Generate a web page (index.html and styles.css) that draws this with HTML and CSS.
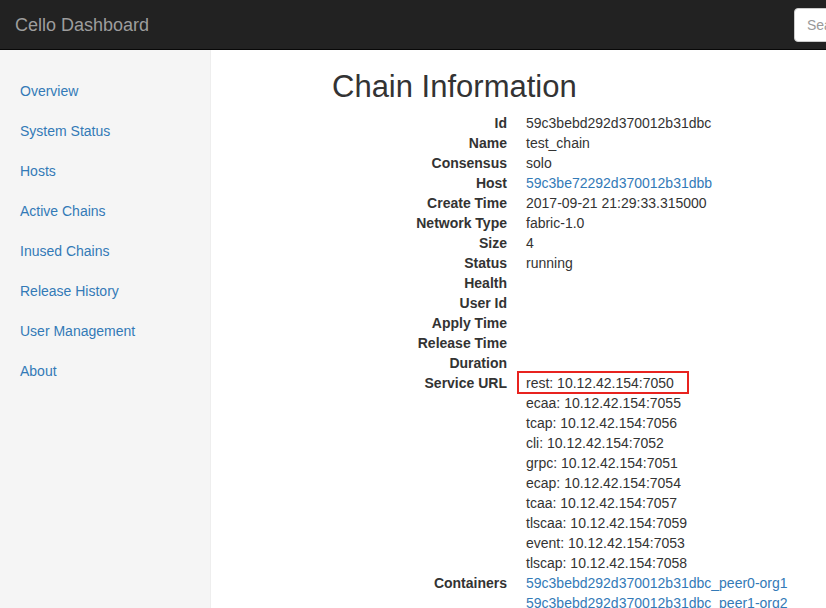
FILE: index.html
```html
<!DOCTYPE html>
<html>
<head>
<meta charset="utf-8">
<link rel="stylesheet" href="styles.css">
</head>
<body>
<header class="navbar">
  <a class="brand" href="#">Cello Dashboard</a>
  <input class="search" type="text" placeholder="Search...">
</header>
<div class="layout">
  <nav class="sidebar">
    <a href="#">Overview</a>
    <a href="#">System Status</a>
    <a href="#">Hosts</a>
    <a href="#">Active Chains</a>
    <a href="#">Inused Chains</a>
    <a href="#">Release History</a>
    <a href="#">User Management</a>
    <a href="#">About</a>
  </nav>
  <main class="main">
    <h1 class="title">Chain Information</h1>
    <dl class="info">
      <dt>Id</dt><dd>59c3bebd292d370012b31dbc</dd>
      <dt>Name</dt><dd>test_chain</dd>
      <dt>Consensus</dt><dd>solo</dd>
      <dt>Host</dt><dd><a href="#">59c3be72292d370012b31dbb</a></dd>
      <dt>Create Time</dt><dd>2017-09-21 21:29:33.315000</dd>
      <dt>Network Type</dt><dd>fabric-1.0</dd>
      <dt>Size</dt><dd>4</dd>
      <dt>Status</dt><dd>running</dd>
      <dt>Health</dt><dd></dd>
      <dt>User Id</dt><dd></dd>
      <dt>Apply Time</dt><dd></dd>
      <dt>Release Time</dt><dd></dd>
      <dt>Duration</dt><dd></dd>
      <dt>Service URL</dt>
      <dd>
        <div class="marked">rest: 10.12.42.154:7050</div>
        <div>ecaa: 10.12.42.154:7055</div>
        <div>tcap: 10.12.42.154:7056</div>
        <div>cli: 10.12.42.154:7052</div>
        <div>grpc: 10.12.42.154:7051</div>
        <div>ecap: 10.12.42.154:7054</div>
        <div>tcaa: 10.12.42.154:7057</div>
        <div>tlscaa: 10.12.42.154:7059</div>
        <div>event: 10.12.42.154:7053</div>
        <div>tlscap: 10.12.42.154:7058</div>
      </dd>
      <dt>Containers</dt>
      <dd>
        <div><a href="#">59c3bebd292d370012b31dbc_peer0-org1</a></div>
        <div><a href="#">59c3bebd292d370012b31dbc_peer1-org2</a></div>
      </dd>
    </dl>
  </main>
</div>
</body>
</html>
```

FILE: styles.css
```css
html, body {
  margin: 0;
  padding: 0;
}
body {
  font-family: "Liberation Sans", Arial, sans-serif;
  font-size: 14px;
  line-height: 20px;
  color: #333;
  background: #fff;
  overflow: hidden;
  height: 608px;
  display: flex;
  flex-direction: column;
}
a {
  color: #337ab7;
  text-decoration: none;
}
.navbar {
  height: 50px;
  flex: 0 0 50px;
  box-sizing: border-box;
  background: #222;
  border-bottom: 1px solid #080808;
  display: flex;
  align-items: center;
  justify-content: space-between;
  padding-left: 15px;
}
.brand {
  color: #9d9d9d;
  font-size: 18px;
  line-height: 20px;
}
.search {
  width: 140px;
  height: 34px;
  box-sizing: border-box;
  margin-right: -108px;
  border: 1px solid #ccc;
  border-radius: 4px;
  padding: 6px 12px;
  font-family: "Liberation Sans", Arial, sans-serif;
  font-size: 14px;
  color: #555;
  background: #fff;
}
.search::placeholder {
  color: #999;
}
.layout {
  flex: 1;
  display: flex;
  min-height: 0;
}
.sidebar {
  width: 210px;
  flex: 0 0 210px;
  background: #f5f5f5;
  border-right: 1px solid #eee;
  padding-top: 21px;
  display: flex;
  flex-direction: column;
}
.sidebar a {
  padding: 10px 20px;
  line-height: 20px;
}
.main {
  flex: 1;
  padding-left: 121px;
}
.title {
  font-size: 31px;
  font-weight: 500;
  line-height: 34px;
  margin: 20px 0 9px;
  color: #333;
}
.info {
  margin: 0;
  display: grid;
  grid-template-columns: 175px auto;
  column-gap: 19px;
}
.info dt {
  font-weight: bold;
  text-align: right;
  min-height: 20px;
}
.info dd {
  margin: 0;
  min-height: 20px;
}
.marked {
  position: relative;
  display: inline-block;
}
.marked::after {
  content: "";
  position: absolute;
  left: -9px;
  top: -2px;
  width: 172px;
  height: 23px;
  box-sizing: border-box;
  border: 2px solid #e8231f;
}
```
